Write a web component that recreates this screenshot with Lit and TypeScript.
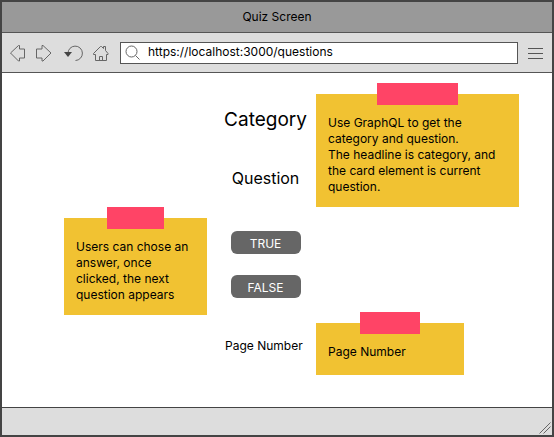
import { LitElement, html, css } from "lit";
import { customElement } from "lit/decorators.js";

@customElement("sticky-note")
class StickyNote extends LitElement {
  static styles = css`
    :host {
      display: block;
      position: relative;
      box-sizing: border-box;
      padding: 21px 12px 12px;
      background: #f1c232;
      font-size: 12px;
      line-height: 16px;
    }
    .tape {
      position: absolute;
      top: -11px;
      left: 30%;
      width: 40%;
      height: 22px;
      background: #ff4466;
    }
  `;

  render() {
    return html`<div class="tape"></div><slot></slot>`;
  }
}

@customElement("app-root")
class AppRoot extends LitElement {
  static styles = css`
    :host {
      display: flex;
      flex-direction: column;
      box-sizing: border-box;
      min-height: 100vh;
      border: 2px solid #444;
      background: #fff;
      color: #000;
      font-family: Inter, "Liberation Sans", sans-serif;
      font-size: 12px;
      line-height: 16px;
    }
    .title {
      padding: 7px 0;
      border-bottom: 1px solid #555;
      background: #999;
      text-align: center;
    }
    .toolbar {
      display: flex;
      align-items: center;
      height: 39px;
      padding: 0 8px;
      border-bottom: 1px solid #555;
      background: #ddd;
    }
    .tool {
      display: block;
      flex: none;
      padding: 0;
      border: 0;
      background: none;
    }
    svg {
      display: block;
      fill: none;
      stroke: #666;
    }
    .back,
    .reload {
      margin-right: 10px;
    }
    .forward {
      margin-right: 12px;
    }
    .home {
      margin-right: 11px;
    }
    .menu {
      margin-left: 10px;
    }
    .menu svg {
      stroke: #555;
    }
    .address {
      display: flex;
      flex: 1;
      align-items: center;
      box-sizing: border-box;
      min-width: 0;
      height: 22px;
      padding-left: 4px;
      gap: 7px;
      border: 1px solid #555;
      background: #fff;
    }
    .url {
      flex: 1;
      min-width: 0;
      height: 16px;
      margin-bottom: 2px;
      padding: 0;
      border: 0;
      outline: 0;
      background: none;
      color: inherit;
      font: inherit;
    }
    .page {
      display: grid;
      flex: 1;
      grid-template-columns: minmax(0, 143fr) minmax(0, 89fr) minmax(0, 203fr);
      column-gap: 10px;
      align-items: start;
      padding: 21px 33px 32px 62px;
    }
    .left {
      padding-top: 124px;
    }
    .quiz {
      display: flex;
      flex-direction: column;
      align-items: center;
      padding: 14px 0 0 8px;
    }
    .category {
      margin: 0 0 34px;
      font-size: 19px;
      font-weight: 400;
      line-height: 24px;
    }
    .question {
      margin: 0 0 41px;
      font-size: 16px;
      line-height: 24px;
    }
    .answer {
      width: 70px;
      height: 23px;
      margin: 0 0 21px;
      padding: 2px 0 0;
      border: 0;
      border-radius: 6px;
      background: #666;
      color: #fff;
      font: inherit;
    }
    .number {
      align-self: flex-start;
      margin: 19px 0 0;
      white-space: nowrap;
    }
    .right {
      display: flex;
      flex-direction: column;
      align-items: flex-start;
      gap: 116px;
    }
    .small {
      width: 73%;
      min-height: 52px;
    }
    .status {
      display: flex;
      align-items: flex-end;
      justify-content: flex-end;
      height: 27px;
      border-top: 1px solid #444;
      background: #ddd;
    }
    .grip {
      margin: 0 1px 1px 0;
    }
  `;

  render() {
    return html`
      <header class="title">Quiz Screen</header>
      <nav class="toolbar">
        <button class="tool back" aria-label="Back">
          <svg width="16" height="18" viewBox="0 0 16 18">
            <path d="M.5 9 8.500 1.500h1V5h5v9h-5v3h-1z" />
          </svg>
        </button>
        <button class="tool forward" aria-label="Forward">
          <svg width="16" height="18" viewBox="0 0 16 18">
            <path d="M15 9 7 1.500H6V5H.5v9H6v3h1z" />
          </svg>
        </button>
        <button class="tool reload" aria-label="Reload">
          <svg width="19" height="18" viewBox="0 0 19 18">
            <path d="M4 9.500A7.200 7.200 0 1 1 11.500 16.500" />
            <path d="M0 8h8L4 13z" fill="#444" stroke="none" />
          </svg>
        </button>
        <button class="tool home" aria-label="Home">
          <svg width="16" height="18" viewBox="0 0 16 18">
            <path
              d="M2.500 10.500H.5V9.500L7.500 2.500H8.500L10.500 4.500V2.500H12.500V6.500L15 9.500V10.500H13.500V16.500H2.500zM6.500 16.500V12.500H9.500V16.500"
            />
          </svg>
        </button>
        <label class="address">
          <svg width="16" height="16" viewBox="0 0 16 16">
            <circle cx="6.500" cy="6.500" r="5.500" />
            <path d="M10.500 10.500 14.500 14.500" />
          </svg>
          <input
            class="url"
            type="text"
            aria-label="Address"
            value="https://localhost:3000/questions"
          />
        </label>
        <button class="tool menu" aria-label="Menu">
          <svg width="16" height="18" viewBox="0 0 16 18">
            <path d="M0 4.500h15M0 9.500h15M0 14.500h15" />
          </svg>
        </button>
      </nav>
      <main class="page">
        <div class="left">
          <sticky-note>
            Users can chose an answer, once clicked, the next question appears
          </sticky-note>
        </div>
        <section class="quiz">
          <h1 class="category">Category</h1>
          <p class="question">Question</p>
          <button class="answer">TRUE</button>
          <button class="answer">FALSE</button>
          <p class="number">Page Number</p>
        </section>
        <div class="right">
          <sticky-note>
            Use GraphQL to get the category and question.<br />
            The headline is category, and the card element is current question.
          </sticky-note>
          <sticky-note class="small">Page Number</sticky-note>
        </div>
      </main>
      <footer class="status">
        <svg class="grip" width="12" height="13" viewBox="0 0 12 13">
          <path d="M.5 12.500 11.500 1.500M4.500 12.500 11.500 5.500" />
        </svg>
      </footer>
    `;
  }
}
